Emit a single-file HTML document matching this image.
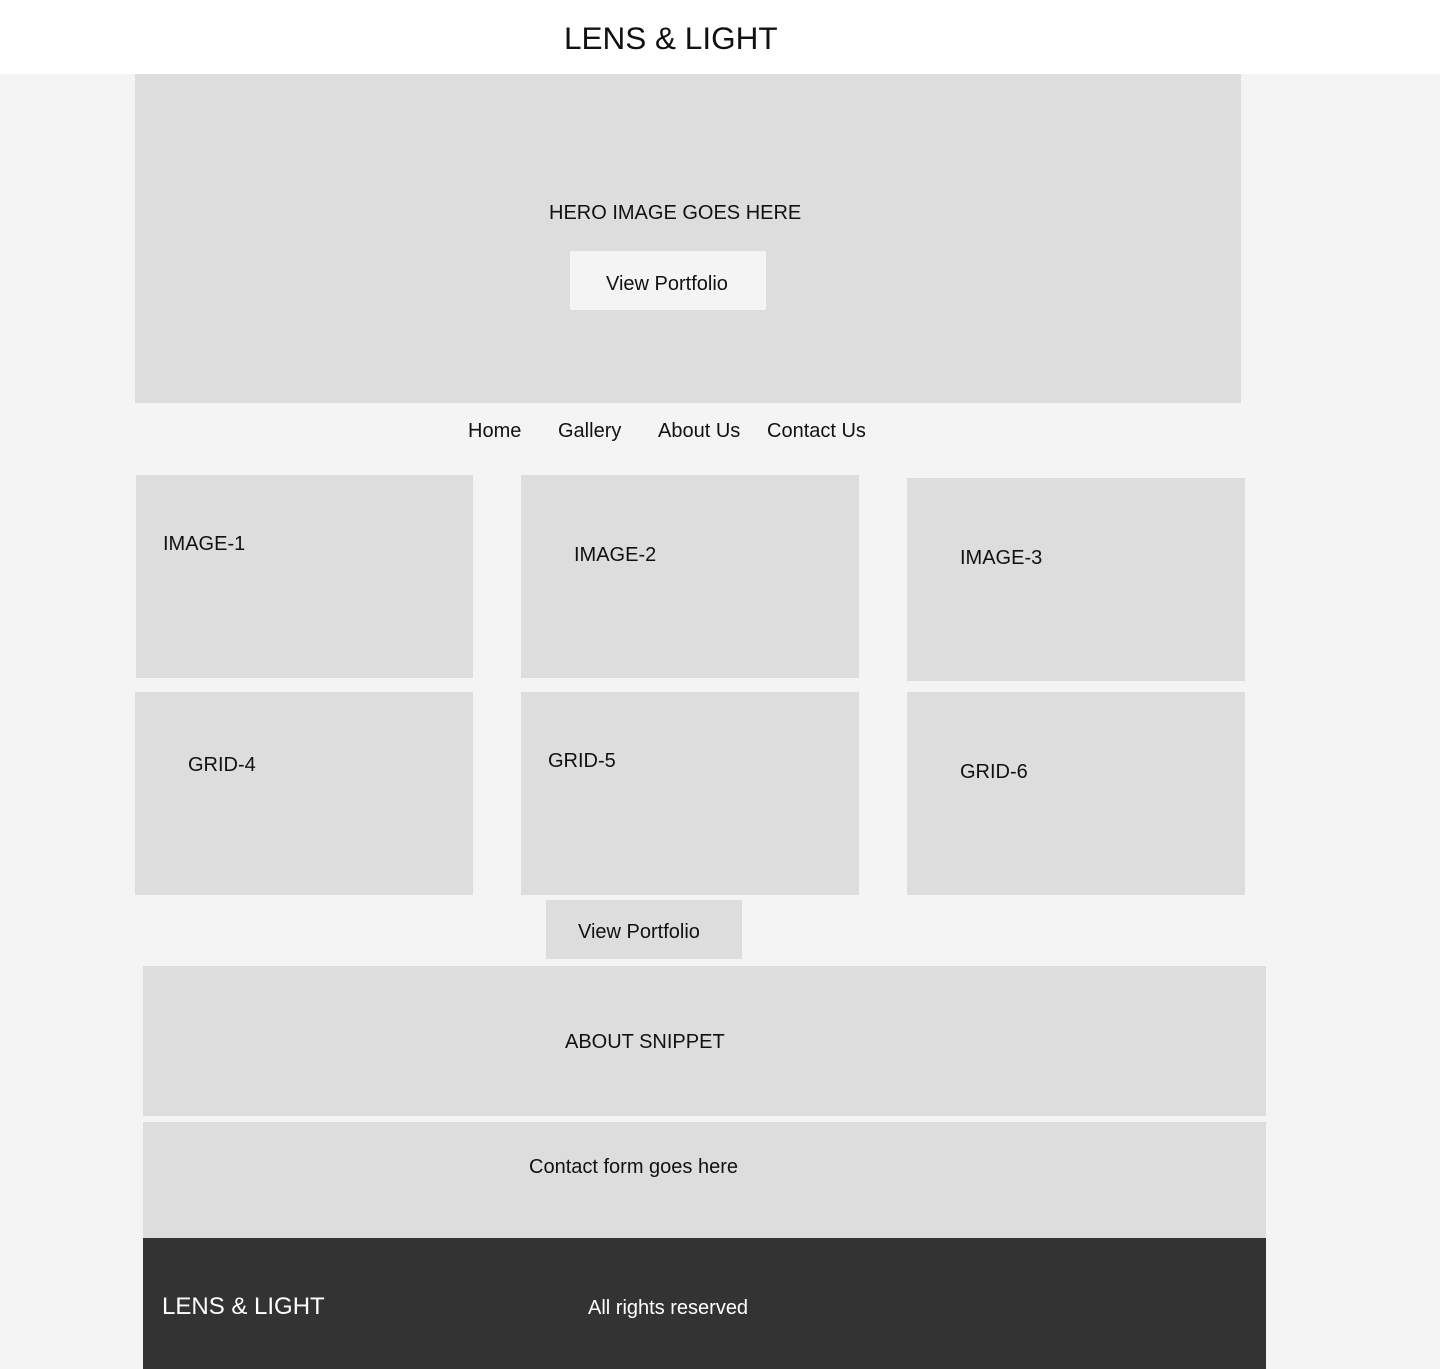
<!DOCTYPE html>
<html><head><meta charset="utf-8"><style>
*{margin:0;padding:0;box-sizing:border-box}
body{width:1440px;height:1369px;background:#f4f4f4;font-family:"Liberation Sans",sans-serif;color:#111;position:relative;overflow:hidden}
div{position:absolute}
.b{background:#dddddd}
.t{position:absolute;white-space:nowrap;font-size:20px;line-height:1}
</style></head><body>
<div style="left:0;top:0;width:1440px;height:74px;background:#fff"></div>
<span class="t" style="left:564px;top:23px;font-size:31.5px;">LENS &amp; LIGHT</span>
<div class="b" style="left:135px;top:74px;width:1106px;height:329px"></div>
<span class="t" style="left:549px;top:203px;">HERO IMAGE GOES HERE</span>
<div style="left:570px;top:251px;width:196px;height:59px;background:#f4f4f4"></div>
<span class="t" style="left:606px;top:274px;">View Portfolio</span>
<span class="t" style="left:468px;top:421px;">Home</span>
<span class="t" style="left:558px;top:421px;">Gallery</span>
<span class="t" style="left:658px;top:421px;">About Us</span>
<span class="t" style="left:767px;top:421px;">Contact Us</span>
<div class="b" style="left:136px;top:475px;width:337px;height:203px"></div>
<div class="b" style="left:521px;top:475px;width:338px;height:203px"></div>
<div class="b" style="left:907px;top:478px;width:338px;height:203px"></div>
<div class="b" style="left:135px;top:692px;width:338px;height:203px"></div>
<div class="b" style="left:521px;top:692px;width:338px;height:203px"></div>
<div class="b" style="left:907px;top:692px;width:338px;height:203px"></div>
<span class="t" style="left:163px;top:534px;">IMAGE-1</span>
<span class="t" style="left:574px;top:545px;">IMAGE-2</span>
<span class="t" style="left:960px;top:548px;">IMAGE-3</span>
<span class="t" style="left:188px;top:755px;">GRID-4</span>
<span class="t" style="left:548px;top:751px;">GRID-5</span>
<span class="t" style="left:960px;top:762px;">GRID-6</span>
<div class="b" style="left:546px;top:900px;width:196px;height:59px"></div>
<span class="t" style="left:578px;top:922px;">View Portfolio</span>
<div class="b" style="left:143px;top:966px;width:1123px;height:150px"></div>
<span class="t" style="left:565px;top:1032px;">ABOUT SNIPPET</span>
<div class="b" style="left:143px;top:1122px;width:1123px;height:116px"></div>
<span class="t" style="left:529px;top:1157px;">Contact form goes here</span>
<div style="left:143px;top:1238px;width:1123px;height:131px;background:#333"></div>
<span class="t" style="left:162px;top:1295px;font-size:24px;color:#fff">LENS &amp; LIGHT</span>
<span class="t" style="left:588px;top:1298px;color:#fff">All rights reserved</span>
</body></html>
